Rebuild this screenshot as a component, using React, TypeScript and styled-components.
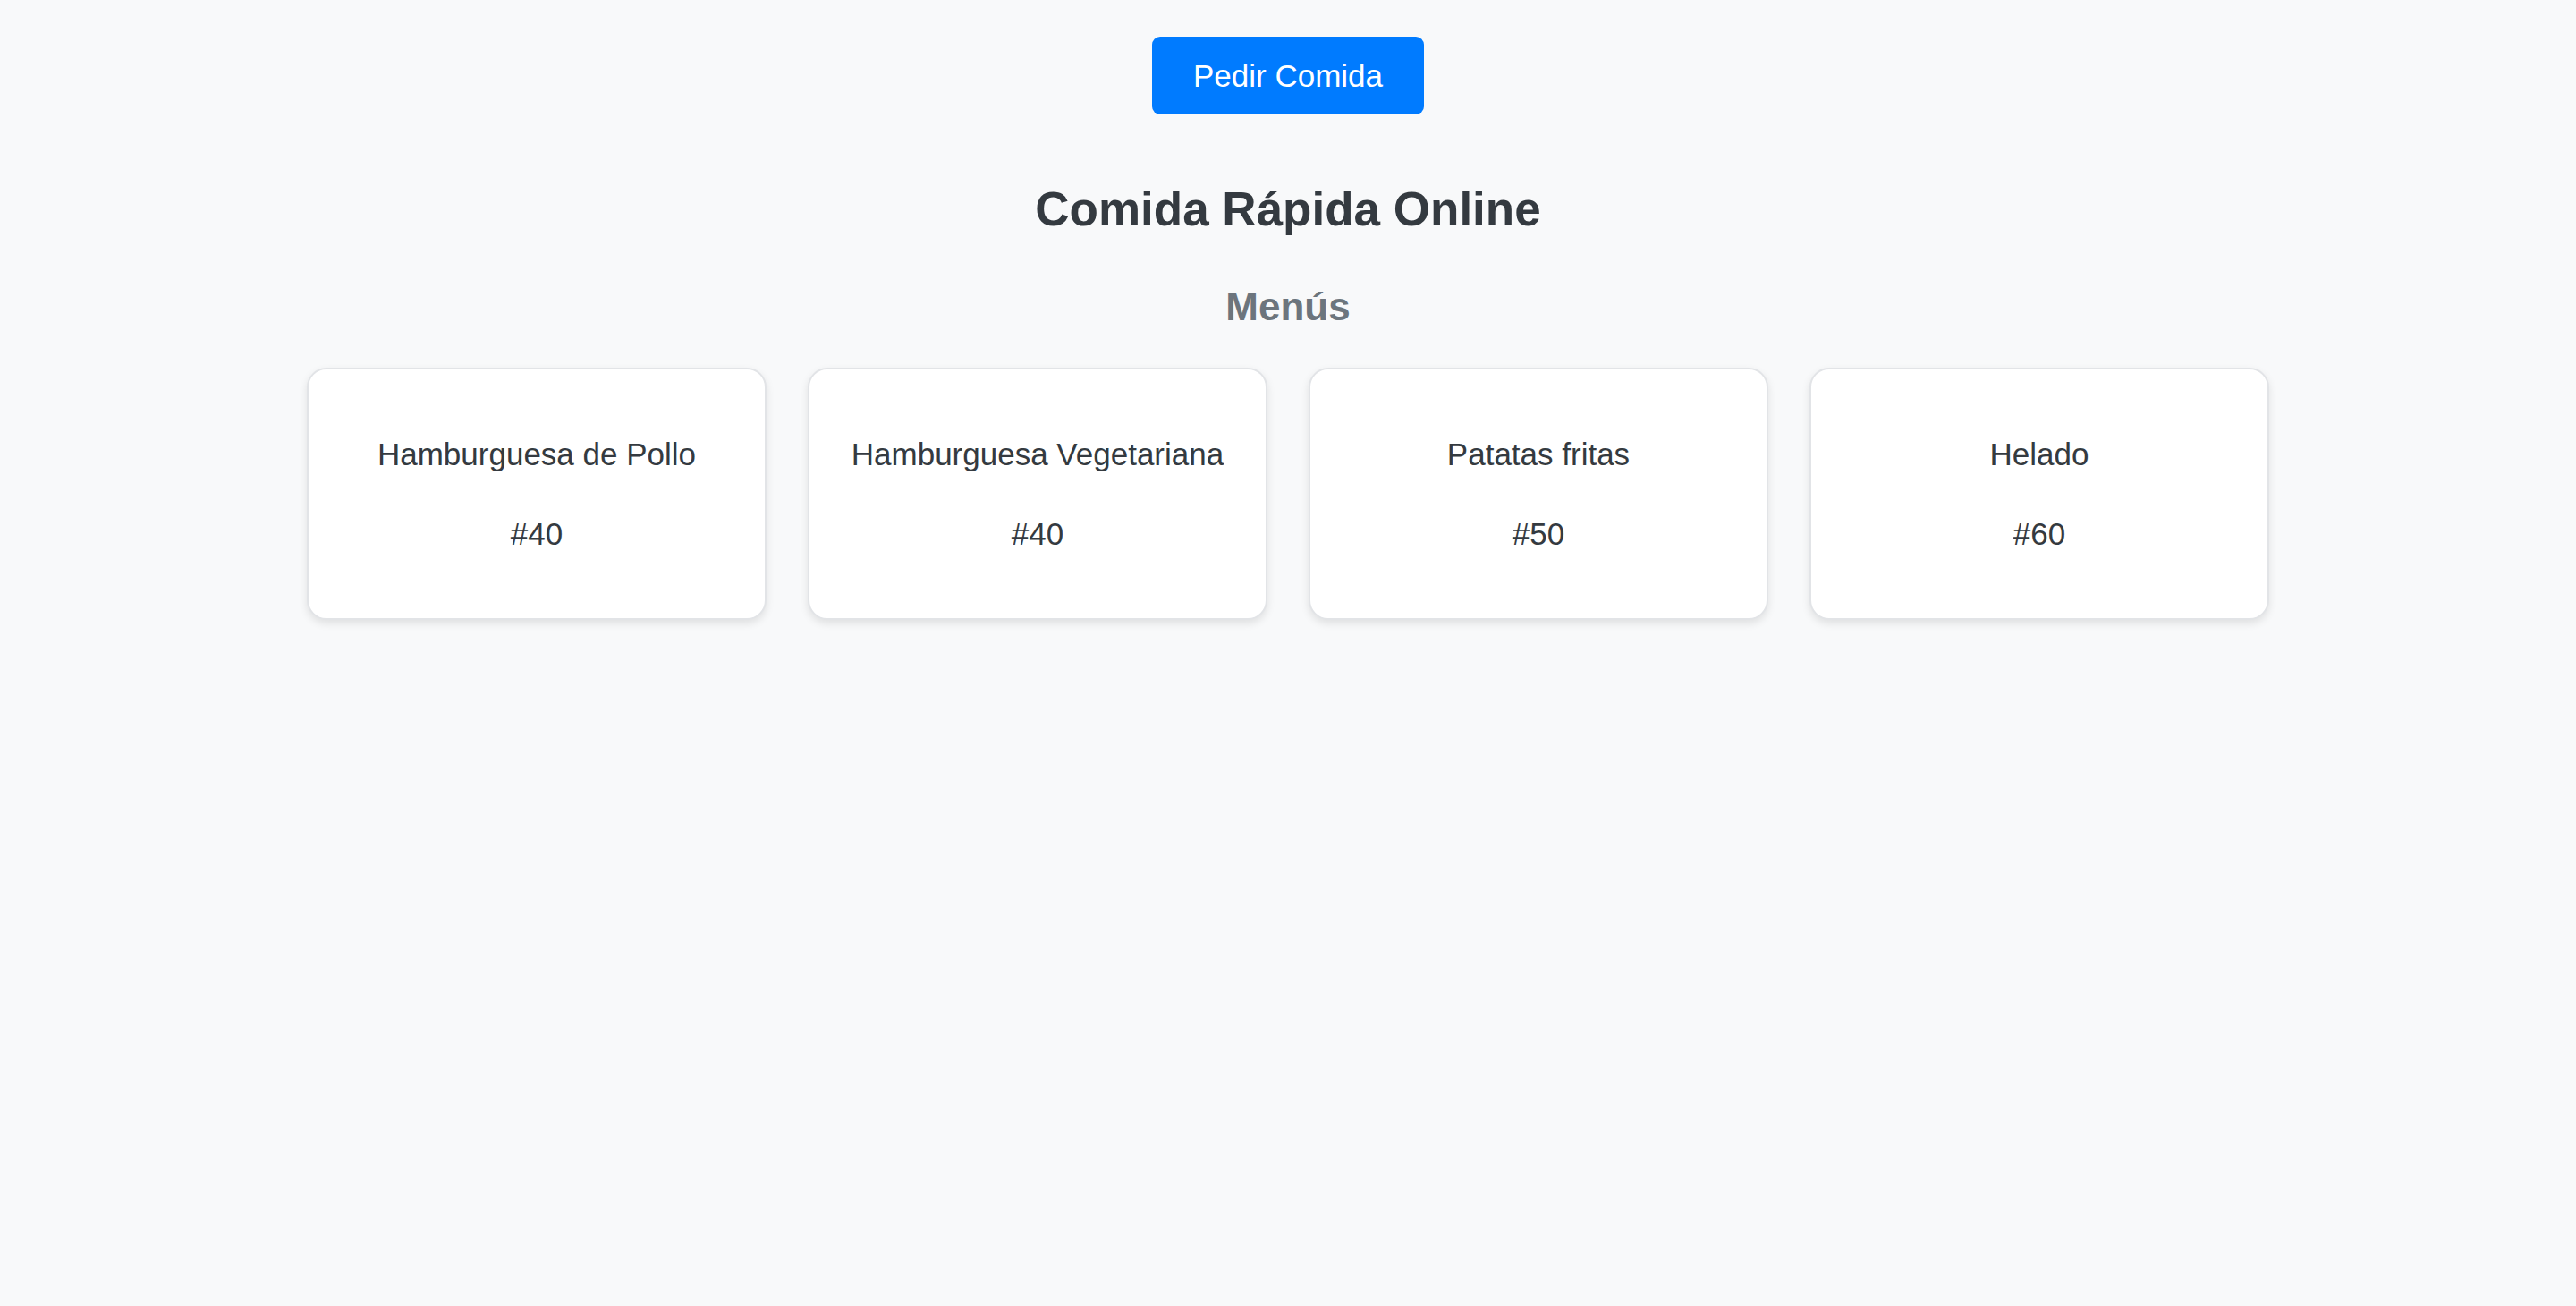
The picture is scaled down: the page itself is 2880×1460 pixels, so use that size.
import React from 'react';
import styled, { createGlobalStyle } from 'styled-components';

interface MenuItem {
  id: number;
  name: string;
  price: string;
}

const menus: MenuItem[] = [
  { id: 1, name: 'Hamburguesa de Pollo', price: '#40' },
  { id: 2, name: 'Hamburguesa Vegetariana', price: '#40' },
  { id: 3, name: 'Patatas fritas', price: '#50' },
  { id: 4, name: 'Helado', price: '#60' },
];

const App: React.FC = () => {
  return (
    <>
      <GlobalStyle />
      <Page>
        <OrderButton type="button">Pedir Comida</OrderButton>
        <Title>Comida Rápida Online</Title>
        <Subtitle>Menús</Subtitle>
        <CardGrid>
          {menus.map((item) => (
            <Card key={item.id}>
              <ItemName>{item.name}</ItemName>
              <ItemPrice>{item.price}</ItemPrice>
            </Card>
          ))}
        </CardGrid>
      </Page>
    </>
  );
};

export default App;

const GlobalStyle = createGlobalStyle`
  html, body {
    margin: 0;
    padding: 0;
    background: #f8f9fa;
    font-family: "Liberation Sans", Arial, sans-serif;
  }

  body {
    min-height: 1460px;
  }
`;

const Page = styled.div`
  display: flex;
  flex-direction: column;
  align-items: center;
  padding-top: 41px;
`;

const OrderButton = styled.button`
  background: #007bff;
  color: #ffffff;
  border: none;
  border-radius: 9px;
  padding: 23px 46px;
  font-family: "Liberation Sans", Arial, sans-serif;
  font-size: 35px;
  line-height: 41px;
  cursor: pointer;
`;

const Title = styled.h1`
  margin: 75px 0 0;
  font-size: 53px;
  font-weight: 700;
  line-height: 61px;
  color: #343a40;
`;

const Subtitle = styled.h2`
  margin: 53px 0 0;
  font-size: 44px;
  font-weight: 700;
  line-height: 51px;
  color: #6c757d;
`;

const CardGrid = styled.div`
  display: grid;
  grid-template-columns: repeat(4, 514px);
  gap: 46px;
  margin-top: 43px;
`;

const Card = styled.div`
  display: flex;
  flex-direction: column;
  align-items: center;
  gap: 49px;
  height: 282px;
  box-sizing: border-box;
  padding: 75px 20px 0;
  background: #ffffff;
  border: 2px solid #e2e4e7;
  border-radius: 22px;
  box-shadow: 0 4px 10px rgba(0, 0, 0, 0.1);
`;

const ItemName = styled.div`
  font-size: 35px;
  line-height: 40px;
  color: #343a40;
`;

const ItemPrice = styled.div`
  font-size: 35px;
  line-height: 40px;
  color: #343a40;
`;
